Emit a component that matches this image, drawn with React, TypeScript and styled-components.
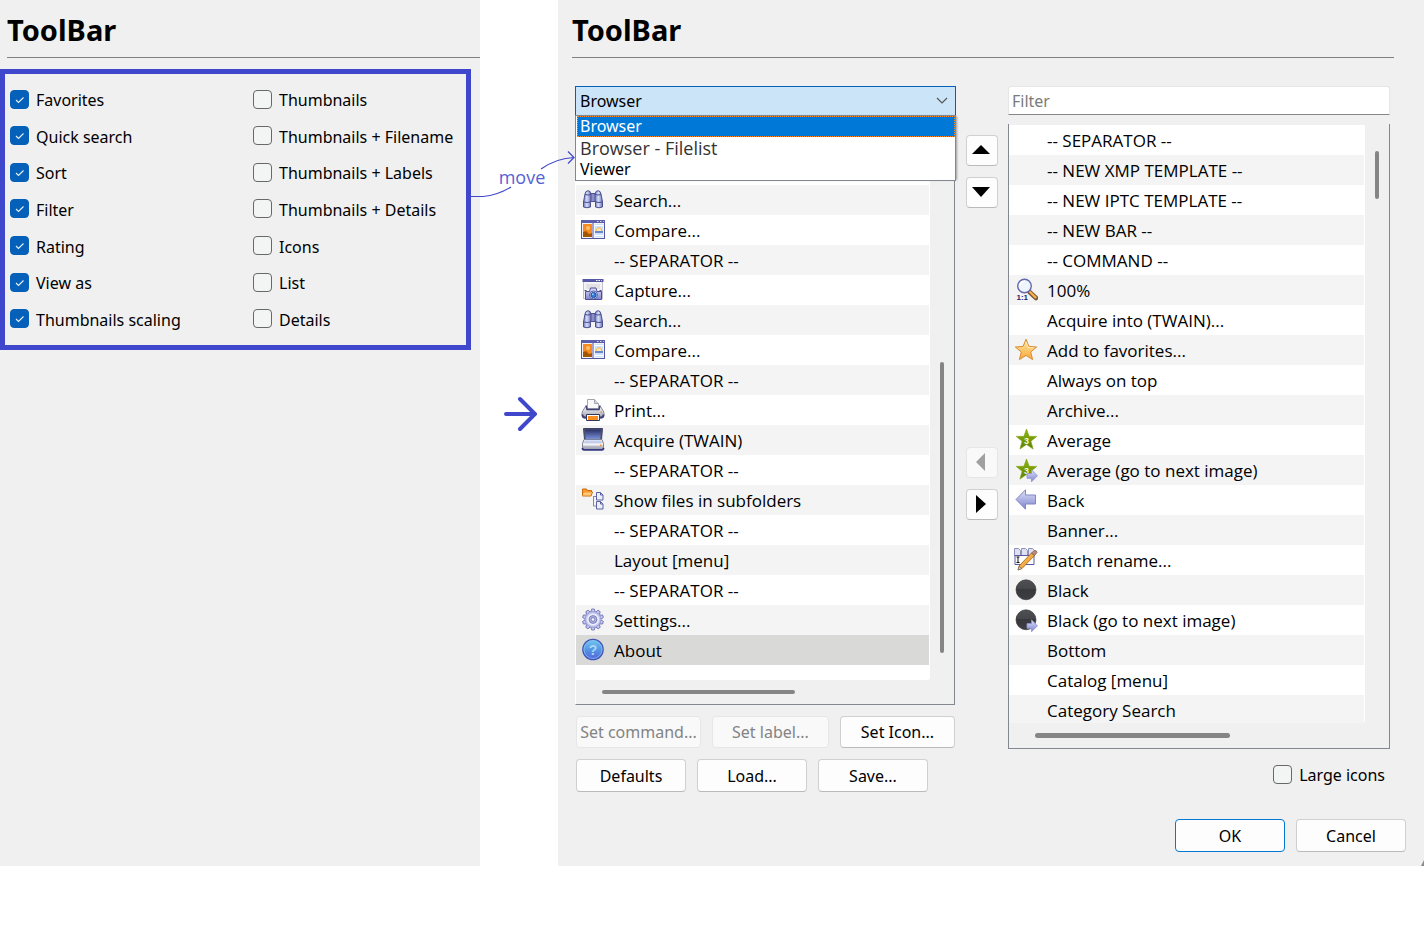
import React from "react";
import styled, { createGlobalStyle, css } from "styled-components";

const ui = `"Noto Sans", "Open Sans", sans-serif`;
const listFont = `"Open Sans", "Noto Sans", sans-serif`;

const GlobalStyle = createGlobalStyle`
  * { box-sizing: border-box; }
  body { margin: 0; background: #fff; color: #000; font-family: ${ui}; font-size: 16px; line-height: 20px; }
  button, input, select { font: inherit; color: inherit; margin: 0; }
  ul { list-style: none; margin: 0; padding: 0; }
`;

const Page = styled.div`
  display: flex;
  align-items: stretch;
`;

const Panel = styled.section<{ $grow: number }>`
  position: relative;
  flex: ${(p) => p.$grow} 1 0;
  min-width: 0;
  background: #f0f0f0;
`;

const Title = styled.h1<{ $left: number; $right: number }>`
  margin: 0 ${(p) => p.$right}px 0 ${(p) => p.$left}px;
  padding: 10px 0 7px;
  border-bottom: 1px solid #808080;
  font-size: 29px;
  line-height: 40px;
  font-weight: 700;
`;

const OptionFrame = styled.div`
  display: grid;
  grid-template-columns: 243fr 213fr;
  grid-template-rows: repeat(7, 1fr);
  grid-auto-flow: column;
  height: 281px;
  margin: 11px 9px 0 0;
  padding: 7px 0 8px 5px;
  border: 5px solid #3f48cc;
`;

const CheckLabel = styled.label`
  display: flex;
  align-items: center;
  gap: 7px;
  white-space: nowrap;
`;

const CheckText = styled.span`
  padding-top: 2px;
`;

const CheckStack = styled.span`
  display: grid;
  width: 19px;
  height: 19px;
  flex: none;
  > * { grid-area: 1 / 1; }
  > svg { pointer-events: none; }
`;

const CheckInput = styled.input`
  appearance: none;
  width: 19px;
  height: 19px;
  border: 1px solid #66686a;
  border-radius: 4px;
  background: #f3f4f4;
  &:checked { background: #0460b8; border-color: #0460b8; }
`;

const Gutter = styled.div`
  position: relative;
  flex: 78 1 0;
`;

const Connector = styled.svg`
  position: absolute;
  top: 140px;
  left: -9px;
  width: calc(100% + 26px);
  height: 70px;
  z-index: 3;
`;

const MoveNote = styled.div`
  display: flex;
  justify-content: center;
  padding: 165px 0 0 6px;
  font-family: ${listFont};
  font-size: 18px;
  line-height: 24px;
  color: #575fd4;
`;

const BigArrow = styled.svg`
  display: block;
  width: 36px;
  height: 36px;
  margin: 207px auto 0;
`;

const Body = styled.div`
  display: grid;
  grid-template-columns: minmax(0, 381fr) 32px minmax(0, 382fr);
  gap: 10px;
  margin-top: 28px;
  padding: 0 34px 0 17px;
`;

const Column = styled.div`
  display: flex;
  flex-direction: column;
  min-width: 0;
`;

const Combo = styled.div`
  position: relative;
  display: grid;
  align-items: center;
  > select, > svg { grid-area: 1 / 1; }
  > svg { justify-self: end; margin-right: 8px; pointer-events: none; }
`;

const ComboSelect = styled.select`
  appearance: none;
  width: 100%;
  height: 30px;
  padding: 0 4px;
  border: 1px solid #0460b8;
  border-bottom-color: #828790;
  border-radius: 0;
  background: #cce4f7;
  outline: none;
`;

const Popup = styled.ul`
  position: absolute;
  z-index: 2;
  top: 29px;
  left: 0;
  right: 0;
  padding-bottom: 1px;
  border: 1px solid #828790;
  background: #fff;
  box-shadow: 2px 0 2px -1px rgba(0, 0, 0, 0.35);
`;

const PopupItem = styled.li<{ $active?: boolean; $large?: boolean }>`
  height: 21px;
  padding: 0 4px;
  line-height: 22px;
  ${(p) =>
    p.$active &&
    css`
      margin-left: 1px;
      padding: 0 2px;
      line-height: 19px;
      border: 1px dotted #ff9020;
      background: #0078d7;
      color: #fff;
    `}
  ${(p) =>
    p.$large &&
    css`
      font-family: ${listFont};
      font-size: 18px;
      color: #333;
    `}
`;

const ListBox = styled.div<{ $left: string; $inset: number }>`
  display: grid;
  grid-template-columns: minmax(0, 1fr) 24px;
  margin: 8px ${(p) => p.$inset}px 0 0;
  padding-top: 1px;
  border: solid #828790;
  border-width: 0 1px 1px;
  border-left-color: ${(p) => p.$left};
`;

const Rows = styled.ul<{ $height: number }>`
  height: ${(p) => p.$height}px;
  overflow: hidden;
  padding: 0 1px 1px 0;
  background: #fff;
  border-radius: 0 0 3px 0;
`;

const Row = styled.li<{ $alt: boolean; $selected?: boolean }>`
  display: flex;
  align-items: center;
  gap: 9px;
  height: 30px;
  padding-left: 5px;
  background: ${(p) => (p.$selected ? "#d9d9d8" : p.$alt ? "#f4f4f4" : "#fff")};
  font-family: ${listFont};
  font-size: 17px;
  line-height: 28px;
  white-space: nowrap;
`;

const RowText = styled.span`
  padding-top: 2px;
`;

const IconSlot = styled.span`
  flex: none;
  width: 24px;
  height: 24px;
  > svg { display: block; }
`;

const VTrack = styled.div`
  display: flex;
  justify-content: center;
`;

const HTrack = styled.div<{ $height: number }>`
  display: flex;
  align-items: center;
  height: ${(p) => p.$height}px;
`;

const Thumb = styled.span<{ $w: string; $h: string; $offset: string }>`
  flex: none;
  width: ${(p) => p.$w};
  height: ${(p) => p.$h};
  margin: ${(p) => p.$offset};
  border-radius: 3px;
  background: #858585;
`;

const Button = styled.button<{ $grow?: number; $tall?: boolean; $primary?: boolean }>`
  ${(p) => (p.$grow ? `flex: ${p.$grow} 1 0;` : "width: 110px;")}
  min-width: 0;
  height: ${(p) => (p.$tall ? 33 : 32)}px;
  padding: 0;
  border: 1px solid ${(p) => (p.$primary ? "#0078d4" : "#d0d0d0")};
  border-bottom-color: ${(p) => (p.$primary ? "#0078d4" : "#bababa")};
  border-radius: 4px;
  background: #fdfdfd;
  white-space: nowrap;
  &:disabled { background: #f9f9f9; border-color: #e6e6e6; color: #838383; }
`;

const ArrowButton = styled(Button)`
  display: grid;
  place-items: center;
  width: 32px;
  height: 31px;
  padding: 0 2px 2px 0;
`;

const ButtonRow = styled.div`
  display: flex;
  gap: 11px;
  margin: 11px 1px 0;
`;

const MoveColumn = styled(Column)`
  gap: 239px;
  padding-top: 49px;
`;

const Pair = styled(Column)`
  gap: 11px;
`;

const FilterInput = styled.input`
  width: 100%;
  height: 29px;
  margin-bottom: 1px;
  padding: 0 3px;
  border: 1px solid #e6e6e6;
  border-bottom-color: #868686;
  border-radius: 3px 3px 0 0;
  background: #fff;
  &::placeholder { color: #7b7b7b; opacity: 1; }
`;

const LargeIcons = styled.div`
  display: flex;
  justify-content: flex-end;
  padding: 14px 5px 0 0;
`;

const Footer = styled.footer`
  display: flex;
  justify-content: flex-end;
  gap: 11px;
  padding: 27px 18px 14px 0;
`;

const Grip = styled.span`
  position: absolute;
  right: 0;
  bottom: 0;
  width: 3px;
  height: 6px;
  background: #8a8a8a;
  clip-path: polygon(100% 0, 100% 100%, 0 100%);
`;

const HiddenDefs = styled.svg`
  position: absolute;
`;

/* Gradients shared by the row icons */
const Defs = () => (
  <HiddenDefs width="0" height="0" aria-hidden="true">
    <defs>
      <linearGradient id="lav" x1="0" y1="0" x2="0" y2="1">
        <stop offset="0" stopColor="#dfe2f8" /><stop offset="1" stopColor="#7d83cf" />
      </linearGradient>
      <linearGradient id="barrel" x1="0" y1="0" x2="1" y2="0">
        <stop offset="0" stopColor="#7479bb" /><stop offset=".45" stopColor="#d4e0fa" /><stop offset="1" stopColor="#6b70b2" />
      </linearGradient>
      <linearGradient id="grey" x1="0" y1="0" x2="0" y2="1">
        <stop offset="0" stopColor="#fafafa" /><stop offset="1" stopColor="#9a9cac" />
      </linearGradient>
      <linearGradient id="gold" x1="0" y1="0" x2="0" y2="1">
        <stop offset="0" stopColor="#ffe9a6" /><stop offset="1" stopColor="#f9a93a" />
      </linearGradient>
      <linearGradient id="green" x1="0" y1="0" x2="0" y2="1">
        <stop offset="0" stopColor="#8db80c" /><stop offset="1" stopColor="#5d8004" />
      </linearGradient>
      <linearGradient id="dark" x1="0" y1="0" x2="0" y2="1">
        <stop offset="0" stopColor="#505154" /><stop offset=".45" stopColor="#454649" /><stop offset=".46" stopColor="#38393b" /><stop offset="1" stopColor="#3d3d44" />
      </linearGradient>
      <linearGradient id="help" x1="0" y1="0" x2="0" y2="1">
        <stop offset="0" stopColor="#74caf0" /><stop offset=".5" stopColor="#5597e4" /><stop offset="1" stopColor="#5560da" />
      </linearGradient>
      <linearGradient id="lid" x1="0" y1="0" x2="0" y2="1">
        <stop offset="0" stopColor="#2a2f66" /><stop offset="1" stopColor="#7b96e0" />
      </linearGradient>
    </defs>
  </HiddenDefs>
);

const Svg = ({ children }: { children: React.ReactNode }) => (
  <svg width="24" height="24" viewBox="0 0 24 24" aria-hidden="true">{children}</svg>
);

const NextBadge = () => (
  <path d="M13 15.500h4.500v-3.700l6 6-6 6v-3.500H13z" fill="url(#lav)" stroke="#8d92cf" strokeWidth=".8" strokeLinejoin="round" />
);

const starPath = "M12 1.200l2.900 7.200 7.800.6-6 5 1.900 7.600-6.600-4.200-6.600 4.200 1.900-7.600-6-5 7.800-.6z";

const GreenStar = () => (
  <>
    <path d="M12.500 1l2.700 7.300 7.600.1-5.900 4.800 2.300 7.900-6.700-4.500-6.600 4.500 2.200-7.900-5.900-4.800 7.700-.1z" fill="url(#green)" stroke="#7da010" strokeWidth=".6" />
    <text x="12.500" y="15.500" fontFamily="Liberation Sans, sans-serif" fontSize="9" fontWeight="700" fill="#f4f8e4" textAnchor="middle">3</text>
  </>
);

const icons: Record<string, React.ReactNode> = {
  search: (
    <Svg>
      <g stroke="#4c4e92" strokeWidth="1" strokeLinejoin="round">
        <path d="M9.500 5.500h5v8h-5z" fill="#8a8fc8" />
        <path d="M5 3.500q2-1.500 4 0l1 2.500v6l-.5 2v5q-3.500 1.500-7 0v-5L4 6z" fill="url(#barrel)" />
        <path d="M19 3.500q-2-1.500-4 0L14 6v6l.500 2v5q3.500 1.500 7 0v-5L20 6z" fill="url(#barrel)" />
        <path d="M4 6.500q3 1 6 0M14 6.500q3 1 6 0M2.600 14q3.500 1 7 0M14.500 14q3.500 1 7 0" fill="none" />
      </g>
    </Svg>
  ),
  compare: (
    <Svg>
      <rect x=".5" y="2.500" width="23" height="18" fill="#f2f3f8" stroke="#5457a0" />
      <path d="M0 2h24v3H0z" fill="#5b5ea8" />
      <path d="M16 3h1.500v1H16zm3 0h1.500v1H19z" fill="#d7d9f4" /><path d="M22 3h1v1h-1z" fill="#ffb93a" />
      <rect x="2" y="6" width="9" height="13" fill="#f98b1e" />
      <circle cx="7" cy="10" r="2" fill="#ffbf70" />
      <path d="M2 14l3-1 3 3 3-1v4H2z" fill="#a35405" />
      <path d="M12 5v16" stroke="#5457a0" />
      <rect x="14" y="6" width="8" height="13" fill="#cfe2fb" />
      <path d="M14 7.500h8M14 17.500h8" stroke="#fff" />
      <path d="M15 13.500c0-5 6-5 6 0z" fill="#ffe9b0" stroke="#f3b33c" />
      <path d="M14 13h8v2h-8z" fill="#6b86d0" />
    </Svg>
  ),
  capture: (
    <Svg>
      <rect x="2.500" y="1.500" width="19" height="19" fill="#f3f3f5" stroke="#c0c1cc" />
      <rect x="5" y="6" width="14" height="5" fill="#e2e2e6" />
      <path d="M1.500 1h21v3h-21z" fill="#5558a4" />
      <path d="M15 2h1.500v1H15zm2.500 0H19v1h-1.500z" fill="#fff" /><path d="M20 2h1v1h-1z" fill="#ffd25a" />
      <path d="M4.500 13.500h4l1-3.500h5.500l1 3.500h4.500v8h-16z" fill="url(#lav)" stroke="#4b4e94" strokeLinejoin="round" />
      <path d="M3.500 12.500h2M18.500 12.500h2" stroke="#4b4e94" />
      <circle cx="12.500" cy="17" r="4" fill="#e8eaf8" stroke="#5a5da4" />
      <circle cx="12.500" cy="17" r="2.600" fill="#2f7fe0" stroke="#24499a" />
      <circle cx="11.800" cy="16.200" r=".8" fill="#c4e6ff" />
    </Svg>
  ),
  print: (
    <Svg>
      <path d="M4.500 8.500L2 12.500q-1 1.500-1 3v2q0 2.500 2.500 2.500h17q2.500 0 2.500-2.500v-2q0-1.500-1-3l-2.500-4z" fill="url(#grey)" stroke="#85889a" />
      <path d="M6.500 10.500v-9h7l4 4v5z" fill="#fafafa" stroke="#a2a4b0" /><path d="M13.500 1.500v4h4" fill="#d8d8dc" stroke="#a2a4b0" />
      <path d="M5 7.500l1 4h12l1-4" fill="none" stroke="#3f4274" strokeWidth="1.500" />
      <path d="M1.500 16.500q0 3 2.500 3h16q2.500 0 2.500-3" fill="none" stroke="#404375" strokeWidth="1.800" />
      <path d="M5.500 16.500h13v6h-13z" fill="#fff" stroke="#35375a" /><path d="M7 18h10v4H7z" fill="#fb8d1f" />
      <path d="M19.500 13.500H21V15h-1.500z" fill="#ff9a28" />
    </Svg>
  ),
  acquire: (
    <Svg>
      <path d="M2.500.500h19l-1 11h-17z" fill="#54576c" stroke="#3f4268" />
      <path d="M4 1.500h16l-.8 10H4.800z" fill="url(#lid)" />
      <path d="M3 11.500h18l1.500 4V20q0 1.500-1.500 1.500H3q-1.500 0-1.500-1.500v-4.500z" fill="url(#grey)" stroke="#7f8298" />
      <path d="M4 12.500h16l1 2.500H3z" fill="#c3cdf0" />
      <path d="M2 15.500h20v2H2z" fill="#f4f4f6" />
      <path d="M1.500 20q0 1.800 1.500 1.800h18q1.500 0 1.500-1.800" fill="none" stroke="#343981" strokeWidth="1.800" />
      <path d="M19 16.500h1.500V18H19z" fill="#ff8a1e" />
    </Svg>
  ),
  subfolders: (
    <Svg>
      <path d="M1.500 8V1h4l1 1.500h4V4h1L10 8z" fill="#f79a2c" stroke="#c76a0c" /><path d="M3 4.500h8l-1.500 3h-8z" fill="#ffc878" />
      <path d="M12.500 8v10h2.500M12.500 8.500h2.500" fill="none" stroke="#85879e" />
      <path d="M15.500 4.500h4l2.500 2.500v5h-6.500z" fill="#eceef8" stroke="#5d60a4" /><path d="M19.500 4.500V7H22" fill="none" stroke="#5d60a4" />
      <path d="M15.500 13.500h4l2.500 2.500v5h-6.500z" fill="#eceef8" stroke="#5d60a4" /><path d="M19.500 13.500V16H22" fill="none" stroke="#5d60a4" />
    </Svg>
  ),
  settings: (
    <Svg>
      {Array.from({ length: 10 }, (_, i) => (
        <path key={i} d="M9.800 4l.9-3h2.600l.9 3z" transform={`rotate(${i * 36} 12 11.500)`} fill="#c4c8ee" stroke="#7377b6" strokeWidth=".9" />
      ))}
      <circle cx="12" cy="11.500" r="7.800" fill="#c4c8ee" stroke="#9a9ed4" strokeWidth=".6" />
      <circle cx="12" cy="11.500" r="5.300" fill="none" stroke="#eceefb" strokeWidth="1.600" />
      <circle cx="12" cy="11.500" r="3.800" fill="#b2b6e0" stroke="#7d81bf" /><circle cx="12" cy="11.500" r="1.800" fill="#f7f7fa" stroke="#686caf" strokeWidth=".8" />
    </Svg>
  ),
  about: (
    <Svg>
      <circle cx="12" cy="11.500" r="10.200" fill="url(#help)" stroke="#4253b4" strokeWidth="1.200" />
      <circle cx="12" cy="11.500" r="9" fill="none" stroke="#82bff4" strokeWidth=".8" />
      <text x="12" y="16.500" textAnchor="middle" fontFamily="Liberation Sans, sans-serif" fontWeight="700" fontSize="14" fill="#a9d6fa">?</text>
    </Svg>
  ),
  zoom: (
    <Svg>
      <path d="M15.500 14l6.500 6" stroke="#77563a" strokeWidth="4.500" strokeLinecap="round" /><path d="M16 14l5.500 5.300" stroke="#f4b04e" strokeWidth="2.400" strokeLinecap="round" />
      <circle cx="10.500" cy="8" r="6.800" fill="#eef5fe" stroke="#6468b0" strokeWidth="1.400" /><path d="M6 8c0-3 2-4.500 4.500-4.500" fill="none" stroke="#fff" strokeWidth="1.600" />
      <text x="2.500" y="22" fontFamily="Liberation Sans, sans-serif" fontWeight="700" fontSize="8" fill="#26296e">1:1</text>
    </Svg>
  ),
  favorite: (
    <Svg>
      <path d={starPath} fill="url(#gold)" stroke="#d98c32" strokeLinejoin="round" />
      <path d="M12 4l2 5.400 5.600.5" fill="none" stroke="#fff3c8" strokeWidth=".8" />
    </Svg>
  ),
  average: <Svg><GreenStar /></Svg>,
  averageNext: <Svg><GreenStar /><NextBadge /></Svg>,
  back: (
    <Svg>
      <path d="M2 11.500l9.500-9.700v5.200h10v9h-10v5.200z" fill="url(#lav)" stroke="#8286c4" strokeLinejoin="round" />
    </Svg>
  ),
  rename: (
    <Svg>
      <g fill="#dfe1f0" stroke="#8285b4" strokeWidth=".9">
        <path d="M.500.500h4l2 2v5.500h-6z" /><path d="M7.500.500h4l2 2v5.500h-6z" /><path d="M14.500.500h4l2 2v5.500h-6z" />
      </g>
      <path d="M1 7.500h19v9H1z" fill="#fff" stroke="#575aa2" />
      <path d="M2.500 9h3M4 9v5.500M2.500 14.500h3" stroke="#111" />
      <path d="M5 18L17.500 5l3 2.500L8 20.500l-4 1.500z" fill="#f6ac45" stroke="#94611c" strokeWidth=".8" />
      <path d="M17.500 5l3-2.500q2-.5 2.500 2l-2.500 3z" fill="#b98d80" stroke="#7f5a4a" strokeWidth=".8" /><path d="M5 18.500l3 2-4 1.500z" fill="#e6d3bb" stroke="#555" strokeWidth=".5" />
    </Svg>
  ),
  black: <Svg><circle cx="12" cy="11.800" r="10" fill="url(#dark)" stroke="#2e2f31" strokeWidth=".6" /></Svg>,
  blackNext: <Svg><circle cx="12" cy="11.800" r="10" fill="url(#dark)" stroke="#2e2f31" strokeWidth=".6" /><NextBadge /></Svg>,
};

type Item = [label: string, icon?: string];

const SEP: Item = ["-- SEPARATOR --"];

const current: Item[] = [
  [""], ["", "capture"], ["Search...", "search"], ["Compare...", "compare"], SEP,
  ["Capture...", "capture"], ["Search...", "search"], ["Compare...", "compare"], SEP,
  ["Print...", "print"], ["Acquire (TWAIN)", "acquire"], SEP,
  ["Show files in subfolders", "subfolders"], SEP, ["Layout [menu]"], SEP,
  ["Settings...", "settings"], ["About", "about"],
];

const available: Item[] = [
  SEP, ["-- NEW XMP TEMPLATE --"], ["-- NEW IPTC TEMPLATE --"], ["-- NEW BAR --"], ["-- COMMAND --"],
  ["100%", "zoom"], ["Acquire into (TWAIN)..."], ["Add to favorites...", "favorite"], ["Always on top"],
  ["Archive..."], ["Average", "average"], ["Average (go to next image)", "averageNext"], ["Back", "back"],
  ["Banner..."], ["Batch rename...", "rename"], ["Black", "black"], ["Black (go to next image)", "blackNext"],
  ["Bottom"], ["Catalog [menu]"], ["Category Search"],
];

const leftOptions = ["Favorites", "Quick search", "Sort", "Filter", "Rating", "View as", "Thumbnails scaling"];
const rightOptions = [
  "Thumbnails", "Thumbnails + Filename", "Thumbnails + Labels", "Thumbnails + Details", "Icons", "List", "Details",
];

const Check = ({ label, checked }: { label: string; checked?: boolean }) => (
  <CheckLabel>
    <CheckStack>
      <CheckInput type="checkbox" defaultChecked={checked} />
      {checked && (
        <svg width="19" height="19" viewBox="0 0 19 19" aria-hidden="true">
          <path d="M6 10l2.500 2.500L13.500 7.500" fill="none" stroke="#e8f2fb" strokeWidth="1.100" />
        </svg>
      )}
    </CheckStack>
    <CheckText>{label}</CheckText>
  </CheckLabel>
);

const ItemList = ({ items, height, selected }: { items: Item[]; height: number; selected?: string }) => (
  <Rows $height={height}>
    {items.map(([label, icon], i) => (
      <Row key={i} $alt={i % 2 === (selected ? 0 : 1)} $selected={label === selected}>
        <IconSlot>{icon && icons[icon]}</IconSlot>
        <RowText>{label}</RowText>
      </Row>
    ))}
  </Rows>
);

const triangles = {
  up: "M0 13L9 4l9 9z",
  down: "M0 4h18l-9 10z",
  left: "M13 0v18L4 9z",
  right: "M4 0v18l10-9z",
};

const MoveButton = ({ dir, disabled }: { dir: keyof typeof triangles; disabled?: boolean }) => (
  <ArrowButton aria-label={`Move ${dir}`} disabled={disabled}>
    <svg width="18" height="18" viewBox="0 0 18 18"><path d={triangles[dir]} fill={disabled ? "#a0a0a0" : "#000"} /></svg>
  </ArrowButton>
);

export default function App() {
  return (
    <>
      <GlobalStyle />
      <Defs />
      <Page>
        <Panel $grow={480}>
          <Title $left={7} $right={0}>ToolBar</Title>
          <OptionFrame>
            {leftOptions.map((o) => <Check key={o} label={o} checked />)}
            {rightOptions.map((o) => <Check key={o} label={o} />)}
          </OptionFrame>
        </Panel>

        <Gutter>
          <Connector viewBox="0 0 104 70" preserveAspectRatio="none" fill="none" stroke="#3f48cc" strokeWidth="1.200">
            <path d="M0 56.500h12Q27 55 40 47M70 29Q86 18 103 17.500M97 11.500l6 6-6 6" />
          </Connector>
          <MoveNote>move</MoveNote>
          <BigArrow viewBox="0 0 36 36" fill="none" stroke="#3f48cc" strokeWidth="4" strokeLinecap="round">
            <path d="M5 18h29M19 3l15 15-15 15" />
          </BigArrow>
        </Gutter>

        <Panel $grow={866}>
          <Title $left={14} $right={30}>ToolBar</Title>
          <Body>
            <Column>
              <Combo>
                <ComboSelect aria-label="Toolbar" defaultValue="Browser">
                  <option>Browser</option>
                  <option>Browser - Filelist</option>
                  <option>Viewer</option>
                </ComboSelect>
                <svg width="12" height="8" viewBox="0 0 12 8" fill="none" stroke="#555" strokeWidth="1.200" aria-hidden="true">
                  <path d="M1 1l5 5 5-5" />
                </svg>
                <Popup role="listbox" aria-label="Toolbar choices">
                  <PopupItem role="option" aria-selected $active>Browser</PopupItem>
                  <PopupItem role="option" $large>Browser - Filelist</PopupItem>
                  <PopupItem role="option">Viewer</PopupItem>
                </Popup>
              </Combo>
              <ListBox $left="#fff" $inset={1}>
                <ItemList items={current} height={555} selected="About" />
                <VTrack><Thumb $w="4px" $h="291px" $offset="237px 0 0" /></VTrack>
                <HTrack $height={24}><Thumb $w="193px" $h="4px" $offset="0 0 0 26px" /></HTrack>
              </ListBox>
              <ButtonRow>
                <Button $grow={125} disabled>Set command...</Button>
                <Button $grow={117} disabled>Set label...</Button>
                <Button $grow={115}>Set Icon...</Button>
              </ButtonRow>
              <ButtonRow>
                <Button $tall>Defaults</Button>
                <Button $tall>Load...</Button>
                <Button $tall>Save...</Button>
              </ButtonRow>
            </Column>

            <MoveColumn>
              <Pair><MoveButton dir="up" /><MoveButton dir="down" /></Pair>
              <Pair><MoveButton dir="left" disabled /><MoveButton dir="right" /></Pair>
            </MoveColumn>

            <Column>
              <FilterInput type="text" placeholder="Filter" aria-label="Filter" />
              <ListBox $left="#828790" $inset={0}>
                <ItemList items={available} height={598} />
                <VTrack><Thumb $w="4px" $h="48px" $offset="26px 0 0" /></VTrack>
                <HTrack $height={25}><Thumb $w="195px" $h="5px" $offset="0 0 0 26px" /></HTrack>
              </ListBox>
              <LargeIcons><Check label="Large icons" /></LargeIcons>
            </Column>
          </Body>
          <Footer>
            <Button $tall $primary>OK</Button>
            <Button $tall>Cancel</Button>
          </Footer>
          <Grip />
        </Panel>
      </Page>
    </>
  );
}
